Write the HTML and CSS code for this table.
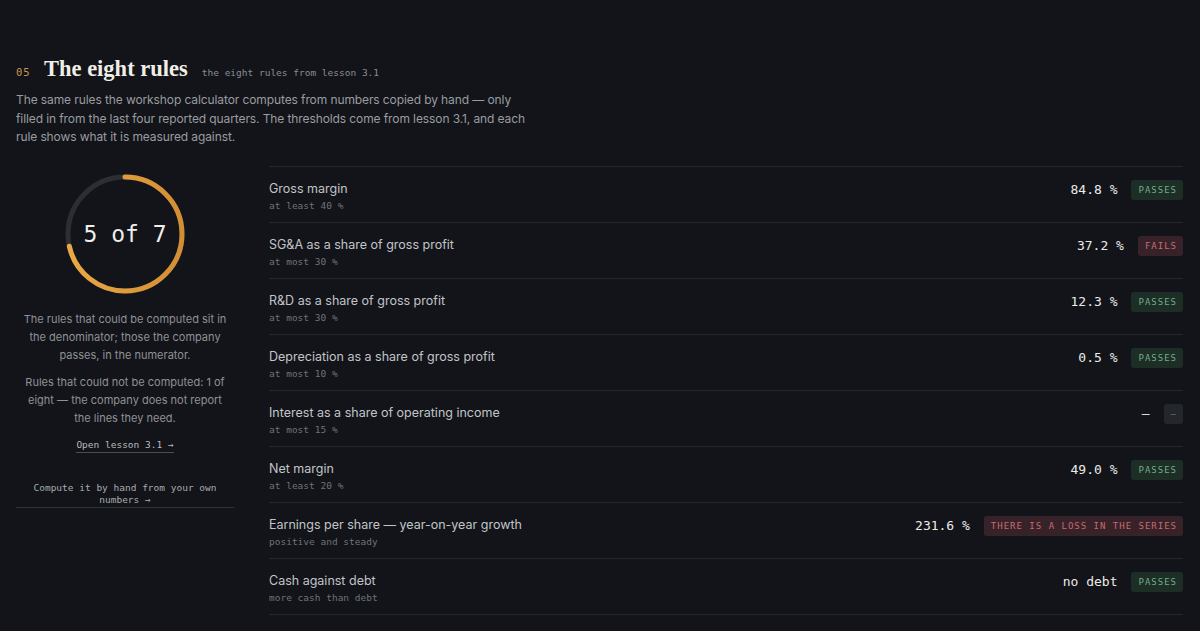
FILE: index.html
```html
<!DOCTYPE html>
<html lang="en">
<head>
<meta charset="utf-8">
<title>The eight rules</title>
<link rel="stylesheet" href="styles.css">
</head>
<body>
<main class="section">
  <header class="head">
    <span class="num">05</span>
    <h2 class="title">The eight rules</h2>
    <span class="kicker">the eight rules from lesson 3.1</span>
  </header>
  <p class="lead">The same rules the workshop calculator computes from numbers copied by hand — only filled in from the last four reported quarters. The thresholds come from lesson 3.1, and each rule shows what it is measured against.</p>

  <div class="grid">
    <aside class="side">
      <div class="ring">
        <svg width="124" height="124" viewBox="0 0 124 124">
          <defs>
            <linearGradient id="g" x1="0" y1="0" x2="0" y2="1">
              <stop offset="0" stop-color="#eaa945"/>
              <stop offset="1" stop-color="#d38e33"/>
            </linearGradient>
          </defs>
          <circle cx="62" cy="62" r="57" fill="none" stroke="#2b2e33" stroke-width="5"/>
          <circle cx="62" cy="62" r="57" fill="none" stroke="url(#g)" stroke-width="5" stroke-linecap="round" stroke-dasharray="255.8 400" transform="rotate(-90 62 62)"/>
        </svg>
        <span class="ring-text">5 of 7</span>
      </div>
      <p class="note">The rules that could be computed sit in the denominator; those the company passes, in the numerator.</p>
      <p class="note">Rules that could not be computed: 1 of eight — the company does not report the lines they need.</p>
      <a class="link" href="#">Open lesson 3.1 →</a>
      <a class="link-wide" href="#">Compute it by hand from your own numbers →</a>
    </aside>

    <div class="rules">
      <div class="row">
        <div class="label"><div class="name">Gross margin</div><div class="sub">at least 40 %</div></div>
        <div class="val">84.8 %</div><span class="badge pass">PASSES</span>
      </div>
      <div class="row">
        <div class="label"><div class="name">SG&amp;A as a share of gross profit</div><div class="sub">at most 30 %</div></div>
        <div class="val">37.2 %</div><span class="badge fail">FAILS</span>
      </div>
      <div class="row">
        <div class="label"><div class="name">R&amp;D as a share of gross profit</div><div class="sub">at most 30 %</div></div>
        <div class="val">12.3 %</div><span class="badge pass">PASSES</span>
      </div>
      <div class="row">
        <div class="label"><div class="name">Depreciation as a share of gross profit</div><div class="sub">at most 10 %</div></div>
        <div class="val">0.5 %</div><span class="badge pass">PASSES</span>
      </div>
      <div class="row">
        <div class="label"><div class="name">Interest as a share of operating income</div><div class="sub">at most 15 %</div></div>
        <div class="val">—</div><span class="badge none">–</span>
      </div>
      <div class="row">
        <div class="label"><div class="name">Net margin</div><div class="sub">at least 20 %</div></div>
        <div class="val">49.0 %</div><span class="badge pass">PASSES</span>
      </div>
      <div class="row">
        <div class="label"><div class="name">Earnings per share — year-on-year growth</div><div class="sub">positive and steady</div></div>
        <div class="val">231.6 %</div><span class="badge fail">THERE IS A LOSS IN THE SERIES</span>
      </div>
      <div class="row">
        <div class="label"><div class="name">Cash against debt</div><div class="sub">more cash than debt</div></div>
        <div class="val">no debt</div><span class="badge pass">PASSES</span>
      </div>
    </div>
  </div>
</main>
</body>
</html>
```

FILE: styles.css
```css
* { box-sizing: border-box; }
html, body { margin: 0; padding: 0; }
body {
  background: #121419;
  color: #c4c6ca;
  font-family: Inter, "Noto Sans", sans-serif;
  width: 1200px;
  height: 631px;
  overflow: hidden;
}
.section {
  padding: 56px 17px 0 16px;
}
.head {
  display: flex;
  align-items: baseline;
}
.num {
  font-family: "DejaVu Sans Mono", monospace;
  font-size: 10.5px;
  color: #c7974f;
  letter-spacing: 1px;
  width: 28px;
}
.title {
  margin: 0;
  font-family: "Liberation Serif", serif;
  font-weight: 700;
  font-size: 22.5px;
  color: #f1eee8;
}
.kicker {
  margin-left: 14px;
  font-family: "DejaVu Sans Mono", monospace;
  font-size: 9.5px;
  color: #8a8d93;
}
.lead {
  margin: 9px 0 0 0;
  max-width: 520px;
  font-size: 12px;
  letter-spacing: -0.1px;
  line-height: 18.5px;
  color: #9a9ca1;
}
.grid {
  display: grid;
  grid-template-columns: 218px 1fr;
  gap: 35px;
  margin-top: 19px;
}
.side {
  display: flex;
  flex-direction: column;
  align-items: center;
  padding-top: 6px;
}
.ring {
  position: relative;
  width: 124px;
  height: 124px;
}
.ring svg { display: block; }
.ring-text {
  position: absolute;
  inset: 0;
  display: flex;
  align-items: center;
  justify-content: center;
  font-family: "DejaVu Sans Mono", monospace;
  font-size: 23px;
  color: #efeeeb;
}
.note {
  margin: 14px 0 0;
  padding: 0 6px;
  text-align: center;
  font-size: 11px;
  line-height: 18px;
  color: #8e9196;
}
.note + .note { margin-top: 9px; }
.link {
  margin-top: 12px;
  font-family: "DejaVu Sans Mono", monospace;
  font-size: 9.5px;
  line-height: 12px;
  color: #b9bbbf;
  text-decoration: none;
  border-bottom: 1px solid #4a4d52;
  padding-bottom: 1px;
}
.link-wide {
  margin-top: 29px;
  align-self: stretch;
  text-align: center;
  font-family: "DejaVu Sans Mono", monospace;
  font-size: 9.5px;
  line-height: 12px;
  color: #a9abaf;
  text-decoration: none;
  border-bottom: 1px solid #2f3237;
  padding: 0 14px 1px;
}
.rules {
  border-top: 1px solid #24272c;
}
.row {
  display: flex;
  align-items: center;
  height: 56px;
  border-bottom: 1px solid #24272c;
  padding-top: 3px;
}
.label { flex: 1; }
.name {
  font-size: 12.5px;
  color: #c2c4c8;
  line-height: 17px;
}
.sub {
  margin-top: 2px;
  font-family: "DejaVu Sans Mono", monospace;
  font-size: 9.5px;
  color: #6f7278;
  line-height: 13px;
}
.val {
  font-family: "DejaVu Sans Mono", monospace;
  font-size: 13px;
  color: #ecebe8;
  margin-right: 14px;
  margin-top: -12px;
}
.badge {
  font-family: "DejaVu Sans Mono", monospace;
  font-size: 9px;
  letter-spacing: 1px;
  padding: 4px 6px 4px 7px;
  border-radius: 3px;
  line-height: 12px;
  margin-top: -12px;
}
.pass { background: #1c2e26; color: #72ad8a; }
.fail { background: #38222a; color: #c66a70; }
.none { background: #23262b; color: #6c6f74; padding: 4px 7px; letter-spacing: 0; }
```
